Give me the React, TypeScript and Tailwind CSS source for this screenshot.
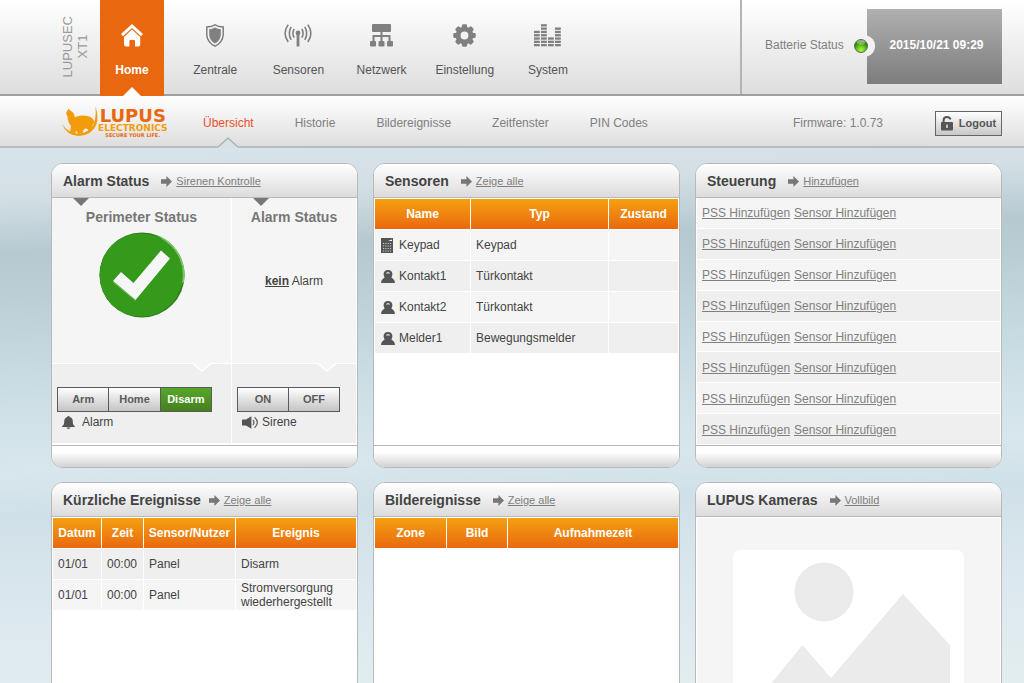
import React, { useState } from 'react';
import clsx from 'clsx';

interface NavItem {
  label: string;
  icon: React.ReactNode;
}

const HomeIcon = () => (
  <svg viewBox="0 0 22 23" className="h-[23px] w-[22px]" fill="currentColor">
    <path d="M11 0 L22 10 L20 12.2 L11 4 L2 12.2 L0 10 Z" />
    <path d="M11 5.6 L19.2 13 V20.5 Q19.2 22.4 17.3 22.4 H14 V17 Q14 16 13 16 H9.4 Q8.4 16 8.4 17 V22.4 H5 Q3 22.4 3 20.5 V13 Z" />
  </svg>
);

const ShieldIcon = () => (
  <svg viewBox="0 0 18 23" className="h-[23px] w-[18px]">
    <path d="M9 .8 Q12 3 17.2 3 V11 Q16.6 18.5 9 22.2 Q1.4 18.5 .8 11 V3 Q6 3 9 .8 Z" fill="#f2f2f2" stroke="#777" strokeWidth="1.4" />
    <path d="M9 3.6 Q11.6 5.2 14.8 5.2 V11 Q14.2 16.6 9 19.6 Q3.8 16.6 3.2 11 V5.2 Q6.4 5.2 9 3.6 Z" fill="#808080" />
  </svg>
);

const AntennaIcon = () => (
  <svg viewBox="0 0 28 23" className="h-[23px] w-7" fill="none" stroke="#808080" strokeWidth="1.6">
    <circle cx="14" cy="9" r="2.4" fill="#808080" stroke="none" />
    <path d="M12.6 10 H15.4 V22.5 H12.6 Z" fill="#808080" stroke="none" />
    <path d="M10.2 5 Q7.6 9.3 10.2 13.6" />
    <path d="M7.2 2.8 Q3.4 9.3 7.2 15.8" />
    <path d="M4.2 .6 Q-2 9.3 4.2 18" />
    <path d="M17.8 5 Q20.4 9.3 17.8 13.6" />
    <path d="M20.8 2.8 Q24.6 9.3 20.8 15.8" />
    <path d="M23.8 .6 Q30 9.3 23.8 18" />
  </svg>
);

const NetworkIcon = () => (
  <svg viewBox="0 0 23 23" className="h-[23px] w-[23px]" fill="#808080">
    <rect x="2" y="0" width="19" height="8" rx="1" />
    <path d="M10.5 8 H12.5 V11 H20.5 V17 H18.5 V13 H12.5 V17 H10.5 V13 H4.5 V17 H2.5 V11 H10.5 Z" />
    <rect x="0" y="17" width="6" height="5.4" rx="1" />
    <rect x="8.5" y="17" width="6" height="5.4" rx="1" />
    <rect x="17" y="17" width="6" height="5.4" rx="1" />
  </svg>
);

const GearIcon = () => (
  <svg viewBox="-11.5 -11.5 23 23" className="h-[23px] w-[23px]">
    <g fill="#808080">
      <circle r="9" />
      {[0, 45, 90, 135].map((a) => (
        <rect key={a} x="-2.6" y="-11.2" width="5.2" height="22.4" rx="1.4" transform={`rotate(${a})`} />
      ))}
    </g>
    <circle r="3.9" fill="#f2f2f2" />
  </svg>
);

const BarsIcon = () => (
  <svg viewBox="0 0 27 23" className="h-[23px] w-[27px]" fill="#808080">
    {[5, 7, 3, 6].map((n, col) =>
      Array.from({ length: n }, (_, i) => (
        <rect key={`${col}-${i}`} x={col * 7} y={20 - i * 3.3} width="5.8" height="2.3" />
      ))
    )}
  </svg>
);

const ArrowIcon = () => (
  <svg viewBox="0 0 11 11" className="h-[11px] w-[11px] shrink-0" fill="#777">
    <path d="M0 3.3 H5.4 V0 L11 5.5 L5.4 11 V7.7 H0 Z" />
  </svg>
);

const KeypadIcon = () => (
  <svg viewBox="0 0 12 15" className="h-[15px] w-3">
    <path d="M0 0 H12 V15 H0 Z" fill="#555" />
    <path d="M7 3 L11 1.6 V3 Z" fill="#fff" />
    <path d="M2 5.5 H10.4 M2 8 H10.4 M2 10.5 H10.4 M2 13 H10.4" stroke="#ccc" strokeWidth="1" strokeDasharray="1.2 1.1" />
  </svg>
);

const SensorIcon = () => (
  <svg viewBox="0 0 14 13" className="h-[13px] w-3.5">
    <path d="M7 0 C10 0 11.4 2 11.4 4 C11.4 5.6 10.8 6.6 10.4 7.4 L12.6 9.2 Q13.8 10.4 14 13 H0 Q.2 10.4 1.4 9.2 L3.6 7.4 C3.2 6.6 2.6 5.6 2.6 4 C2.6 2 4 0 7 0 Z" fill="#555" />
    <path d="M5 3.2 Q7 .8 9 3.2 L8.2 3.8 Q7 2.8 5.8 3.8 Z" fill="#ddd" />
  </svg>
);

const BellIcon = () => (
  <svg viewBox="0 0 13 13" className="h-[13px] w-[13px]" fill="#555">
    <path d="M6.5 0 Q7.6 0 7.8 1 C10.2 1.6 10.8 3.4 10.8 5.4 C10.8 8 11.4 9 13 10.4 V11 H0 V10.4 C1.6 9 2.2 8 2.2 5.4 C2.2 3.4 2.8 1.6 5.2 1 Q5.4 0 6.5 0 Z" />
    <path d="M4.4 11.6 H8.6 Q8 13 6.5 13 Q5 13 4.4 11.6 Z" />
  </svg>
);

const SpeakerIcon = () => (
  <svg viewBox="0 0 17 13" className="h-[13px] w-[17px]">
    <path d="M0 4 Q0 3.4 .6 3.4 H4 L9.4 .2 V12.8 L4 9.6 H.6 Q0 9.6 0 9 Z" fill="#555" />
    <path d="M11 4 Q12.8 6.5 11 9 M12.6 1.2 Q18.2 6.5 12.6 11.8" fill="none" stroke="#666" strokeWidth="1.3" />
  </svg>
);

const LockIcon = () => (
  <svg viewBox="0 0 12 15" className="h-[15px] w-3">
    <path d="M2.6 7 V4.4 Q2.6 1 6 1 Q8.6 1 9.6 3.4" fill="none" stroke="#555" strokeWidth="2" />
    <rect x="0" y="6" width="12" height="8.6" rx="1" fill="#555" />
    <path d="M5.2 8.6 H6.8 V12 H5.2 Z" fill="#ddd" />
  </svg>
);

const WolfIcon = () => (
  <svg viewBox="186 318 108 90" className="h-[30px] w-9 shrink-0" fill="#f39c0b">
    <path d="M205 326 L213 333 L221 340 L225 352 Q240 344 262 348 Q279 351 283 366 L277 376 L274 392 L264 396 L264 388 L256 385 L250 390 L248 400 L234 402 L230 392 L225 400 L210 397 L213 378 Q202 364 203 350 L198 340 Z" />
    <path d="M186 372 Q200 407 236 408 Q275 406 289 374 Q297 348 286 319 Q290 350 281 372 Q268 399 236 401 Q204 400 186 372 Z" />
  </svg>
);

const navItems: NavItem[] = [
  { label: 'Home', icon: <HomeIcon /> },
  { label: 'Zentrale', icon: <ShieldIcon /> },
  { label: 'Sensoren', icon: <AntennaIcon /> },
  { label: 'Netzwerk', icon: <NetworkIcon /> },
  { label: 'Einstellung', icon: <GearIcon /> },
  { label: 'System', icon: <BarsIcon /> },
];

const subItems = ['Übersicht', 'Historie', 'Bildereignisse', 'Zeitfenster', 'PIN Codes'];

const sensors = [
  { name: 'Keypad', type: 'Keypad', icon: <KeypadIcon /> },
  { name: 'Kontakt1', type: 'Türkontakt', icon: <SensorIcon /> },
  { name: 'Kontakt2', type: 'Türkontakt', icon: <SensorIcon /> },
  { name: 'Melder1', type: 'Bewegungsmelder', icon: <SensorIcon /> },
];

const events = [
  { date: '01/01', time: '00:00', source: 'Panel', text: 'Disarm' },
  { date: '01/01', time: '00:00', source: 'Panel', text: 'Stromversorgung wiederhergestellt' },
];

const Header = () => (
  <header className="flex h-24 border-b-2 border-[#a0a0a0] bg-linear-to-b from-white to-[#dedede]">
    <div className="flex w-[100px] shrink-0 items-center justify-end pr-2.5">
      <div className="rotate-180 text-center text-[13px] leading-[15px] text-[#999] [writing-mode:vertical-rl]">
        LUPUSEC
        <br />
        XT1
      </div>
    </div>
    <nav className="flex w-[480px] shrink-0 justify-between">
      {navItems.map((item, i) => (
        <a
          key={item.label}
          href="#"
          className={clsx(
            'relative flex w-16 flex-col items-center pt-6',
            i === 0 ? '-mb-0.5 bg-[#e9680f] font-bold text-white' : 'text-[#555]'
          )}
        >
          {item.icon}
          <span className="mt-[15px] leading-4">{item.label}</span>
          {i === 0 && (
            <svg viewBox="0 0 18 9" className="absolute bottom-0 h-[9px] w-[18px]" fill="#fff">
              <path d="M0 9 L9 0 L18 9 Z" />
            </svg>
          )}
        </a>
      ))}
    </nav>
    <div className="ml-auto flex w-[284px] shrink-0 border-l-2 border-[#b4b4b4] pr-[22px]">
      <div className="flex flex-1 items-start pt-[37px] pl-[23px]">
        <span className="leading-4 text-[#808080]">Batterie Status</span>
      </div>
      <div className="relative mt-[9px] flex h-[75px] w-[135px] items-center justify-center bg-linear-to-b from-[#b0b0b0] to-[#7d7d7d] pb-1 pl-1 font-bold text-white">
        2015/10/21 09:29
        <svg viewBox="0 0 22 22" className="absolute top-[26px] -left-3.5 h-[22px] w-[22px]">
          <defs>
            <radialGradient id="led" cx=".5" cy=".8" r=".75">
              <stop offset="0" stopColor="#b4f542" />
              <stop offset=".45" stopColor="#5cc414" />
              <stop offset=".8" stopColor="#2f7f10" />
              <stop offset="1" stopColor="#86b878" />
            </radialGradient>
          </defs>
          <path d="M14 .4 A11 11 0 0 1 14 21.6 Z" fill="#f1f1f1" />
          <circle cx="8" cy="11" r="6.5" fill="url(#led)" stroke="#5d6b57" />
          <ellipse cx="8" cy="7.6" rx="4" ry="2" fill="#fff" opacity=".35" />
        </svg>
      </div>
    </div>
  </header>
);

const SubHeader = () => (
  <div className="flex h-[52px] items-center border-b-2 border-[#b9bdbe] bg-linear-to-b from-white to-[#dedede] pr-[22px] pl-[62px]">
    <a href="#" className="flex w-[141px] shrink-0 items-center font-['DejaVu_Sans'] font-bold text-[#e9680f]">
      <WolfIcon />
      <span className="flex flex-col items-center pt-1">
        <span className="text-[18px] leading-4">LUPUS</span>
        <span className="text-[9px] leading-2 text-[#f39c0b]">ELECTRONICS</span>
        <span className="text-[5px] leading-[6px]">SECURE YOUR LIFE.</span>
      </span>
    </a>
    <nav className="flex h-full gap-[41px] text-[#808080]">
      {subItems.map((item, i) => (
        <a key={item} href="#" className={clsx('relative flex h-full flex-col items-center justify-center pt-1', i === 0 && 'text-[#e9502a]')}>
          {item}
          {i === 0 && (
            <svg viewBox="0 0 20 11" className="absolute -bottom-0.5 h-[11px] w-5">
              <path d="M0 10 L10 1 L20 10 V11 H0 Z" fill="#d6e2e8" />
              <path d="M0 10 L10 1 L20 10" fill="none" stroke="#aaa" strokeWidth="1.2" />
            </svg>
          )}
        </a>
      ))}
    </nav>
    <span className="mr-[52px] ml-auto pt-1 text-[#808080]">Firmware: 1.0.73</span>
    <button className="mt-1 flex h-[25px] w-[67px] items-center justify-center gap-1.5 border border-[#666] bg-linear-to-b from-white to-[#c8c8c8] text-[11px] font-bold text-[#555]">
      <LockIcon />
      Logout
    </button>
  </div>
);

interface CardProps {
  title: string;
  link: string;
  gap?: string;
  children: React.ReactNode;
}

const Card: React.FC<CardProps> = ({ title, link, gap = 'gap-3', children }) => (
  <section className="flex flex-col overflow-hidden rounded-xl border border-[#b9b9b9] bg-white">
    <header className={clsx('flex h-[34px] items-center border-b border-[#b9b9b9] bg-linear-to-b from-white to-[#dcdcdc] pl-[11px]', gap)}>
      <h2 className="text-sm font-bold text-[#444]">{title}</h2>
      <span className="flex items-center gap-1 pt-0.5">
        <ArrowIcon />
        <a href="#" className="text-[11px] text-[#808080] underline">{link}</a>
      </span>
    </header>
    <div className="flex min-h-[247px] flex-1 flex-col">{children}</div>
    <footer className="h-[22px] border-t border-[#b9b9b9] bg-linear-to-b from-white from-30% to-[#d2d2d2]" />
  </section>
);

const th = 'h-[30px] bg-linear-to-b from-[#f4a010] to-[#e9680f] p-0 text-center font-bold text-white';
const td = 'h-[30px] p-0 leading-[14px]';
const tableClass = 'w-full table-fixed border-separate border-spacing-px text-[#444]';

const Toggle = ({ options, initial }: { options: string[]; initial?: string }) => {
  const [active, setActive] = useState(initial);

  return (
    <div className="flex border border-[#5a5a5a]">
      {options.map((o, i) => (
        <button
          key={o}
          onClick={() => setActive(o)}
          className={clsx(
            'h-[23px] flex-1 text-[11px] font-bold',
            i > 0 && 'border-l border-[#5a5a5a]',
            o === active
              ? 'bg-linear-to-b from-[#55a828] to-[#46801f] text-white'
              : 'bg-linear-to-b from-white to-[#c4c4c4] text-[#5a5a5a]'
          )}
        >
          {o}
        </button>
      ))}
    </div>
  );
};

const TopPointer = () => (
  <svg viewBox="0 0 16 8" className="absolute top-0 left-[21px] h-2 w-4" fill="#777">
    <path d="M0 0 H16 L8 8 Z" />
  </svg>
);

const NotchPointer = () => (
  <svg viewBox="0 0 18 9" className="absolute -top-px right-5 h-[9px] w-[18px]">
    <path d="M0 0 H18 L9 8 Z" fill="#f5f5f5" />
    <path d="M0 .5 L9 8 L18 .5" fill="none" stroke="#fff" strokeWidth="1.4" />
  </svg>
);

const AlarmCard = () => (
  <Card title="Alarm Status" link="Sirenen Kontrolle">
    <div className="grid flex-1 grid-cols-[179px_1fr] gap-px pr-px pb-0.5">
      <div className="flex flex-col bg-[#f5f5f5]">
        <div className="relative flex h-[166px] flex-col items-center border-b border-white pt-[9px]">
          <TopPointer />
          <h3 className="text-sm leading-5 font-bold text-[#777]">Perimeter Status</h3>
          <svg viewBox="0 0 86 86" className="mt-[5px] h-[86px] w-[86px]">
            <circle cx="43" cy="43" r="42.6" fill="#2f7d17" />
            <path d="M55 2 A42.6 42.6 0 0 1 85 50 L80 54 L62 6 Z" fill="#7cc768" />
            <circle cx="42.3" cy="43" r="41.6" fill="#35991b" />
            <path d="M14 49 L22 40 L34.5 51 L62 18.5 L71 26.5 L36.5 68 Z" fill="#f6f6f6" />
            <path d="M14 49 L36.5 68 L37 69.5 L14 50.5 Z" fill="#6cb85a" />
          </svg>
        </div>
        <div className="relative flex-1 bg-[#efefef] pt-[23px] pr-[19px] pl-[5px]">
          <NotchPointer />
          <Toggle options={['Arm', 'Home', 'Disarm']} initial="Disarm" />
          <p className="flex items-center gap-[7px] pl-[5px] leading-5 text-[#444]">
            <BellIcon />
            Alarm
          </p>
        </div>
      </div>
      <div className="flex flex-col bg-[#f5f5f5]">
        <div className="relative flex h-[166px] flex-col items-center border-b border-white pt-[9px]">
          <TopPointer />
          <h3 className="text-sm leading-5 font-bold text-[#777]">Alarm Status</h3>
          <p className="mt-11 leading-5 text-[#444]">
            <b className="underline">kein</b> Alarm
          </p>
        </div>
        <div className="relative flex-1 bg-[#efefef] pt-[23px] pr-4 pl-[5px]">
          <NotchPointer />
          <Toggle options={['ON', 'OFF']} />
          <p className="flex items-center gap-[3px] pl-[5px] leading-5 text-[#444]">
            <SpeakerIcon />
            Sirene
          </p>
        </div>
      </div>
    </div>
  </Card>
);

const SensorCard = () => (
  <Card title="Sensoren" link="Zeige alle">
    <table className={tableClass}>
      <thead>
        <tr>
          <th className={clsx(th, 'w-[95px]')}>Name</th>
          <th className={th}>Typ</th>
          <th className={clsx(th, 'w-[69px]')}>Zustand</th>
        </tr>
      </thead>
      <tbody>
        {sensors.map((s) => (
          <tr key={s.name} className="odd:bg-[#f5f5f5] even:bg-[#efefef]">
            <td className={td}>
              <span className="flex items-center pl-1.5">
                <span className="w-[18px]">{s.icon}</span>
                {s.name}
              </span>
            </td>
            <td className={clsx(td, 'pl-[5px]')}>{s.type}</td>
            <td className={td} />
          </tr>
        ))}
      </tbody>
    </table>
  </Card>
);

const ControlCard = () => (
  <Card title="Steuerung" link="Hinzufügen">
    <ul className="flex flex-1 flex-col gap-px px-px pb-px">
      {Array.from({ length: 8 }, (_, i) => (
        <li key={i} className="flex flex-1 items-center gap-1 pt-px pl-[5px] text-[#808080] underline odd:bg-[#f5f5f5] even:bg-[#efefef]">
          <a href="#">PSS Hinzufügen</a>
          <a href="#">Sensor Hinzufügen</a>
        </li>
      ))}
    </ul>
  </Card>
);

const EventCard = () => (
  <Card title="Kürzliche Ereignisse" link="Zeige alle" gap="gap-2">
    <table className={tableClass}>
      <thead>
        <tr>
          <th className={clsx(th, 'w-12')}>Datum</th>
          <th className={clsx(th, 'w-[41px]')}>Zeit</th>
          <th className={clsx(th, 'w-[91px]')}>Sensor/Nutzer</th>
          <th className={th}>Ereignis</th>
        </tr>
      </thead>
      <tbody>
        {events.map((e) => (
          <tr key={e.text} className="odd:bg-[#efefef] even:bg-[#f5f5f5]">
            <td className={clsx(td, 'pl-[5px]')}>{e.date}</td>
            <td className={clsx(td, 'pl-[5px]')}>{e.time}</td>
            <td className={clsx(td, 'pl-[5px]')}>{e.source}</td>
            <td className={clsx(td, 'pl-[5px]')}>{e.text}</td>
          </tr>
        ))}
      </tbody>
    </table>
  </Card>
);

const PictureCard = () => (
  <Card title="Bildereignisse" link="Zeige alle">
    <table className={tableClass}>
      <thead>
        <tr>
          <th className={clsx(th, 'w-[71px]')}>Zone</th>
          <th className={clsx(th, 'w-[60px]')}>Bild</th>
          <th className={th}>Aufnahmezeit</th>
        </tr>
      </thead>
    </table>
  </Card>
);

const CameraCard = () => (
  <Card title="LUPUS Kameras" link="Vollbild">
    <div className="m-px flex flex-1 justify-center bg-[#f5f5f5] pt-8">
      <svg viewBox="0 0 231 182" className="h-[182px] w-[231px]">
        <rect width="231" height="182" rx="7" fill="#fff" />
        <circle cx="91" cy="42" r="29.5" fill="#ebebeb" />
        <path d="M14 165 V163 L69.5 95 L98 128 L170 44 L217 95 V165 Z" fill="#ebebeb" />
      </svg>
    </div>
  </Card>
);

const App: React.FC = () => (
  <div className="h-screen overflow-hidden bg-[#dfebf0] font-['Liberation_Sans',Arial,sans-serif] text-xs">
    <Header />
    <SubHeader />
    <main className="grid grid-cols-3 gap-x-[15px] gap-y-3.5 bg-[linear-gradient(178deg,#d8e4eb_0px,#d3dfe5_50px,#b6c9d1_105px,#bacdd4_140px,#cbdde4_240px,#d8e7ed_325px,#d0e0e8_370px,#dce8ef_470px,#e2edef_560px)] pt-[15px] pr-[22px] pb-6 pl-[51px]">
      <AlarmCard />
      <SensorCard />
      <ControlCard />
      <EventCard />
      <PictureCard />
      <CameraCard />
    </main>
  </div>
);

export default App;
